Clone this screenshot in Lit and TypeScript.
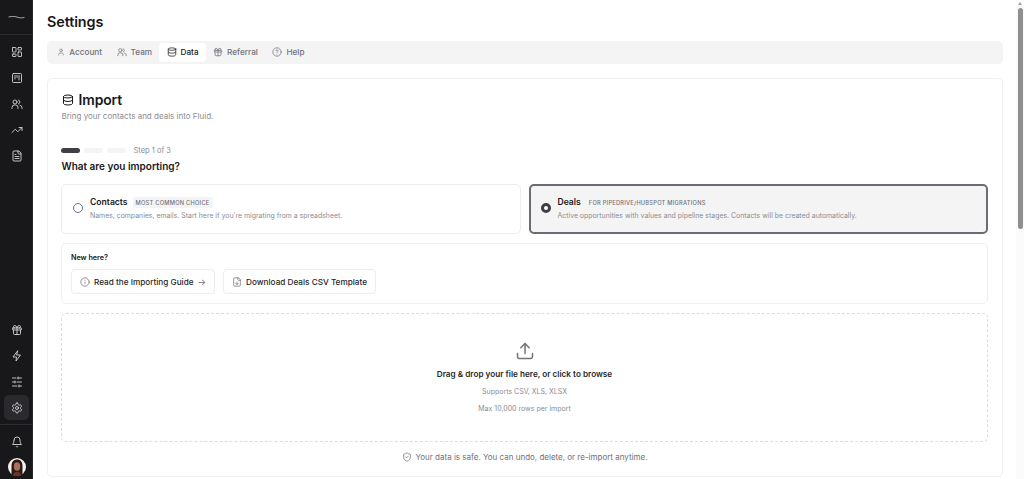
import { LitElement, css, html, svg } from "lit";
import { customElement } from "lit/decorators.js";

const icon = (body: unknown, size = 12, sw = 2) => html`<svg
  width=${size}
  height=${size}
  viewBox="0 0 24 24"
  fill="none"
  stroke="currentColor"
  stroke-width=${sw}
  stroke-linecap="round"
  stroke-linejoin="round"
>${body}</svg>`;

const dashboard = svg`<rect x="3" y="3" width="7" height="9" rx="1"/><rect x="14" y="3" width="7" height="5" rx="1"/><rect x="14" y="12" width="7" height="9" rx="1"/><rect x="3" y="16" width="7" height="5" rx="1"/>`;
const kanban = svg`<rect x="3" y="3" width="18" height="18" rx="2"/><path d="M8 7v7"/><path d="M12 7v4"/><path d="M16 7v9"/>`;
const users = svg`<circle cx="8" cy="8" r="4"/><path d="M2 21v-2a5 5 0 0 1 5-5h2a5 5 0 0 1 5 5v2"/><path d="M15 4.2a4 4 0 0 1 0 7.6"/><path d="M18 14.5a5 5 0 0 1 4 4.5v2"/>`;
const trend = svg`<path d="M22 7 13.5 15.5 8.5 10.5 2 17"/><path d="M16 7h6v6"/>`;
const file = svg`<path d="M15 2H6a2 2 0 0 0-2 2v16a2 2 0 0 0 2 2h12a2 2 0 0 0 2-2V7Z"/><path d="M14 2v4a2 2 0 0 0 2 2h4"/><path d="M10 9H8"/><path d="M16 13H8"/><path d="M16 17H8"/>`;
const gift = svg`<rect x="3" y="8" width="18" height="4" rx="1"/><path d="M12 8v13"/><path d="M19 12v7a2 2 0 0 1-2 2H7a2 2 0 0 1-2-2v-7"/><path d="M7.5 8a2.5 2.5 0 0 1 0-5A4.8 8 0 0 1 12 8a4.8 8 0 0 1 4.5-5 2.5 2.5 0 0 1 0 5"/>`;
const zap = svg`<path d="M13 2 4 14h7l-1 8 9-12h-7Z"/>`;
const sliders = svg`<path d="M21 4h-7"/><path d="M10 4H3"/><path d="M21 12h-9"/><path d="M8 12H3"/><path d="M21 20h-5"/><path d="M12 20H3"/><path d="M14 2v4"/><path d="M8 10v4"/><path d="M16 18v4"/>`;
const gear = svg`<path d="M12.22 2h-.44a2 2 0 0 0-2 2v.18a2 2 0 0 1-1 1.73l-.43.25a2 2 0 0 1-2 0l-.15-.08a2 2 0 0 0-2.73.73l-.22.38a2 2 0 0 0 .73 2.73l.15.1a2 2 0 0 1 1 1.72v.51a2 2 0 0 1-1 1.74l-.15.09a2 2 0 0 0-.73 2.73l.22.38a2 2 0 0 0 2.73.73l.15-.08a2 2 0 0 1 2 0l.43.25a2 2 0 0 1 1 1.73V20a2 2 0 0 0 2 2h.44a2 2 0 0 0 2-2v-.18a2 2 0 0 1 1-1.73l.43-.25a2 2 0 0 1 2 0l.15.08a2 2 0 0 0 2.73-.73l.22-.39a2 2 0 0 0-.73-2.73l-.15-.08a2 2 0 0 1-1-1.74v-.5a2 2 0 0 1 1-1.74l.15-.09a2 2 0 0 0 .73-2.73l-.22-.38a2 2 0 0 0-2.73-.73l-.15.08a2 2 0 0 1-2 0l-.43-.25a2 2 0 0 1-1-1.73V4a2 2 0 0 0-2-2z"/><circle cx="12" cy="12" r="3"/>`;
const bell = svg`<path d="M6 8a6 6 0 0 1 12 0c0 7 3 9 3 9H3s3-2 3-9"/><path d="M10.3 21a1.94 1.94 0 0 0 3.4 0"/>`;
const user = svg`<path d="M19 21v-2a4 4 0 0 0-4-4H9a4 4 0 0 0-4 4v2"/><circle cx="12" cy="7" r="4"/>`;
const database = svg`<ellipse cx="12" cy="5" rx="9" ry="3"/><path d="M3 5v14a9 3 0 0 0 18 0V5"/><path d="M3 12a9 3 0 0 0 18 0"/>`;
const help = svg`<circle cx="12" cy="12" r="10"/><path d="M9.09 9a3 3 0 0 1 5.83 1c0 2-3 3-3 3"/><path d="M12 17h.01"/>`;
const info = svg`<circle cx="12" cy="12" r="10"/><path d="M12 16v-4"/><path d="M12 8h.01"/>`;
const fileDown = svg`<path d="M15 2H6a2 2 0 0 0-2 2v16a2 2 0 0 0 2 2h12a2 2 0 0 0 2-2V7Z"/><path d="M14 2v4a2 2 0 0 0 2 2h4"/><path d="M12 18v-6"/><path d="m9 15 3 3 3-3"/>`;
const upload = svg`<path d="M21 15v4a2 2 0 0 1-2 2H5a2 2 0 0 1-2-2v-4"/><path d="m17 8-5-5-5 5"/><path d="M12 3v12"/>`;
const shield = svg`<path d="M20 13c0 5-3.5 7.5-7.66 8.95a1 1 0 0 1-.67-.01C7.5 20.5 4 18 4 13V6a1 1 0 0 1 1-1c2 0 4.5-1.2 6.24-2.72a1.17 1.17 0 0 1 1.52 0C14.51 3.81 17 5 19 5a1 1 0 0 1 1 1z"/><path d="m9 12 2 2 4-4"/>`;

const tabs = [
  { label: "Account", ic: user },
  { label: "Team", ic: users },
  { label: "Data", ic: database, active: true },
  { label: "Referral", ic: gift },
  { label: "Help", ic: help },
];

@customElement("app-root")
export class AppRoot extends LitElement {
  static styles = css`
    :host {
      display: flex;
      height: 479px;
      overflow: hidden;
      background: #fff;
      font-family: Inter, "Liberation Sans", sans-serif;
      color: #18181b;
    }
    svg {
      display: block;
      flex: none;
    }

    .side {
      width: 33px;
      flex: none;
      background: #18181b;
      border-right: 1px solid #27272a;
      box-sizing: border-box;
      display: flex;
      flex-direction: column;
      color: #d4d4d8;
    }
    .logo {
      height: 35px;
      flex: none;
      display: flex;
      align-items: center;
      justify-content: center;
      border-bottom: 1px solid #2e2e32;
      box-sizing: border-box;
    }
    .nav {
      display: flex;
      flex-direction: column;
      align-items: center;
      gap: 1px;
      padding-top: 4px;
      padding-left: 1px;
    }
    .nav-btn {
      width: 25px;
      height: 25px;
      border-radius: 5px;
      display: flex;
      align-items: center;
      justify-content: center;
    }
    .nav-btn.on {
      background: #2a2a2e;
    }
    .grow {
      flex: 1;
    }
    .side-bottom {
      border-top: 1px solid #2e2e32;
      display: flex;
      flex-direction: column;
      align-items: center;
      padding: 4px 0 3px 1px;
      margin-top: 4px;
    }
    .avatar {
      width: 18px;
      height: 18px;
      margin-top: 4px;
    }

    .main {
      flex: 1;
      min-width: 0;
      padding: 12px 13px 0 14px;
      box-sizing: border-box;
    }
    h1 {
      margin: 0;
      font-size: 14.4px;
      line-height: 20px;
      font-weight: 600;
      letter-spacing: -0.1px;
    }
    .tabs {
      margin-top: 9px;
      height: 23px;
      background: #f4f4f5;
      border-radius: 5px;
      display: flex;
      align-items: center;
      padding: 0 3px;
    }
    .tab {
      height: 19px;
      box-sizing: border-box;
      padding: 0 7.25px 1px;
      display: flex;
      align-items: center;
      gap: 4px;
      font-size: 8.2px;
      font-weight: 500;
      color: #71717a;
      border-radius: 4px;
    }
    .tab.on {
      background: #fff;
      color: #18181b;
    }

    .card {
      margin-top: 14px;
      height: 399px;
      box-sizing: border-box;
      border: 1px solid #f0f0f1;
      border-radius: 5px;
      padding: 13px 14px 0 13px;
    }
    .title {
      display: flex;
      align-items: center;
      gap: 5px;
      height: 16px;
      margin-left: 0.5px;
      font-size: 13.9px;
      font-weight: 600;
      letter-spacing: -0.1px;
    }
    .lead {
      margin: 2px 0 0 0.5px;
      font-size: 8px;
      line-height: 12px;
      color: #8b8b94;
    }
    .steps {
      margin-top: 23px;
      display: flex;
      align-items: center;
      gap: 4px;
      height: 10px;
      font-size: 7.5px;
      color: #8b8b94;
    }
    .bar {
      width: 19px;
      height: 5px;
      border-radius: 3px;
      background: #f4f4f5;
    }
    .bar.on {
      background: #3f3f46;
    }
    .steps span {
      margin-left: 3.5px;
    }
    h2 {
      margin: 4px 0 0 0.5px;
      font-size: 10px;
      line-height: 14px;
      font-weight: 600;
    }

    .choices {
      margin-top: 11px;
      display: grid;
      grid-template-columns: 1fr 1fr;
      gap: 8px;
      height: 50px;
    }
    .choice {
      box-sizing: border-box;
      border: 1px solid #ececee;
      border-radius: 5px;
      display: flex;
      align-items: center;
      gap: 7px;
      padding: 0 11px 2px;
    }
    .choice.on {
      border: 2px solid #6b6b73;
      padding: 0 10px 2px;
      background: #f4f4f5;
    }
    .radio {
      width: 10px;
      height: 10px;
      flex: none;
      box-sizing: border-box;
      border-radius: 50%;
      border: 1px solid #64748b;
      background: #fff;
    }
    .choice.on .radio {
      border: 3px solid #3f3f46;
    }
    .choice-head {
      display: flex;
      align-items: center;
      gap: 5px;
      height: 13px;
      font-size: 8.6px;
      font-weight: 600;
    }
    .tag {
      font-size: 5.7px;
      font-weight: 500;
      letter-spacing: 0.25px;
      color: #71717a;
      padding: 2px 3px;
      border-radius: 2px;
      text-transform: uppercase;
    }
    .tag.grey {
      background: #f4f4f5;
    }
    .choice p {
      margin: 2px 0 0;
      font-size: 6.92px;
      line-height: 10px;
      color: #8b8b94;
    }

    .guide {
      margin-top: 9px;
      height: 61px;
      box-sizing: border-box;
      border: 1px solid #f0f0f1;
      border-radius: 5px;
      padding: 9px 9px 0;
    }
    .guide b {
      display: block;
      font-size: 7.2px;
      line-height: 10px;
      font-weight: 600;
    }
    .links {
      margin-top: 6px;
      display: flex;
      gap: 8px;
    }
    .link {
      height: 25px;
      box-sizing: border-box;
      border: 1px solid #ececee;
      border-radius: 4px;
      padding: 0 8px;
      display: flex;
      align-items: center;
      gap: 4px;
      font-size: 8.2px;
      font-weight: 500;
      color: #27272a;
    }
    .link svg {
      color: #71717a;
    }
    .arrow {
      color: #71717a;
      font-size: 9px;
      font-weight: 400;
    }

    .drop {
      margin-top: 9px;
      height: 129px;
      box-sizing: border-box;
      border: 1px dashed #dcdcdf;
      border-radius: 5px;
      display: flex;
      flex-direction: column;
      align-items: center;
      padding-top: 27px;
      color: #71717a;
    }
    .drop strong {
      margin-top: 7px;
      font-size: 8.2px;
      line-height: 12px;
      font-weight: 600;
      color: #27272a;
    }
    .drop small {
      font-size: 7px;
      line-height: 10px;
      color: #8b8b94;
      margin-top: 7px;
    }
    .safe {
      margin-top: 9px;
      display: flex;
      justify-content: center;
      align-items: center;
      gap: 4px;
      height: 12px;
      font-size: 8px;
      color: #71717a;
    }

    .scroll {
      width: 8px;
      flex: none;
      display: flex;
      flex-direction: column;
      align-items: center;
      background: #fbfbfb;
    }
    .scroll i {
      width: 0;
      height: 0;
      margin-top: 2px;
      border: 2.5px solid transparent;
      border-top: 0;
      border-bottom: 3px solid #a3a3a3;
    }
    .thumb {
      width: 5px;
      height: 221px;
      margin-top: 3px;
      border-radius: 3px;
      background: #8f8f8f;
    }
  `;

  render() {
    return html`
      <aside class="side">
        <div class="logo">
          <svg width="17" height="5" viewBox="0 0 17 5" fill="none" stroke="#b4b4bb" stroke-width="0.9">
            <path d="M0.5 2C5 1 7 1.4 10 2.4C12 3 14 3 16.5 2.4" />
          </svg>
        </div>
        <nav class="nav">
          ${[dashboard, kanban, users, trend, file].map(
            (i) => html`<div class="nav-btn">${icon(i, 12, 1.8)}</div>`
          )}
        </nav>
        <div class="grow"></div>
        <nav class="nav">
          ${[gift, zap, sliders].map(
            (i) => html`<div class="nav-btn">${icon(i, 12, 1.8)}</div>`
          )}
          <div class="nav-btn on">${icon(gear, 12, 1.8)}</div>
        </nav>
        <div class="side-bottom">
          <div class="nav-btn">${icon(bell, 12, 1.8)}</div>
          <svg class="avatar" viewBox="0 0 18 18">
            <circle cx="9" cy="9" r="9" fill="#f4f1ee" />
            <path d="M3.5 18V8C3.5 3.5 6 1.5 9 1.5S14.5 3.5 14.5 8V18Z" fill="#2a1a16" />
            <ellipse cx="9" cy="8.5" rx="3.2" ry="4.2" fill="#a8705a" />
            <path d="M5 18c0-3 2-4.2 4-4.2s4 1.2 4 4.2Z" fill="#6e3328" />
          </svg>
        </div>
      </aside>

      <main class="main">
        <h1>Settings</h1>
        <div class="tabs">
          ${tabs.map(
            (t) => html`<div class="tab ${t.active ? "on" : ""}">${icon(t.ic, t.label === "Account" ? 8 : 10, 1.8)}${t.label}</div>`
          )}
        </div>

        <section class="card">
          <div class="title">${icon(database, 12, 2)}Import</div>
          <div class="lead">Bring your contacts and deals into Fluid.</div>

          <div class="steps">
            <div class="bar on"></div>
            <div class="bar"></div>
            <div class="bar"></div>
            <span>Step 1 of 3</span>
          </div>
          <h2>What are you importing?</h2>

          <div class="choices">
            <div class="choice">
              <div class="radio"></div>
              <div>
                <div class="choice-head">Contacts <span class="tag grey">Most common choice</span></div>
                <p>Names, companies, emails. Start here if you're migrating from a spreadsheet.</p>
              </div>
            </div>
            <div class="choice on">
              <div class="radio"></div>
              <div>
                <div class="choice-head">Deals <span class="tag">For Pipedrive/HubSpot migrations</span></div>
                <p>Active opportunities with values and pipeline stages. Contacts will be created automatically.</p>
              </div>
            </div>
          </div>

          <div class="guide">
            <b>New here?</b>
            <div class="links">
              <div class="link">${icon(info, 10, 1.8)}Read the Importing Guide <span class="arrow">→</span></div>
              <div class="link">${icon(fileDown, 10, 1.8)}Download Deals CSV Template</div>
            </div>
          </div>

          <div class="drop">
            ${icon(upload, 20, 1.8)}
            <strong>Drag &amp; drop your file here, or click to browse</strong>
            <small>Supports CSV, XLS, XLSX</small>
            <small>Max 10,000 rows per import</small>
          </div>

          <div class="safe">${icon(shield, 10, 1.8)}Your data is safe. You can undo, delete, or re-import anytime.</div>
        </section>
      </main>

      <div class="scroll"><i></i><div class="thumb"></div></div>
    `;
  }
}
